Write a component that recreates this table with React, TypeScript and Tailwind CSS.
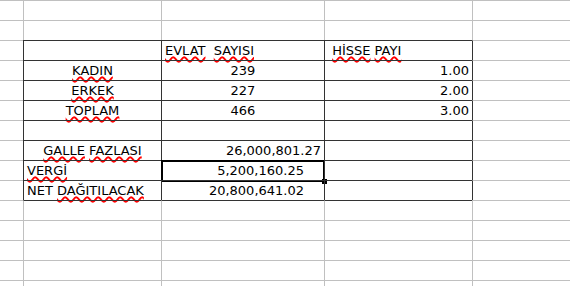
import type { ReactNode } from 'react';

// spell-check squiggle under a word
function W({ children }: { children: ReactNode }) {
  return (
    <span className="underline decoration-wavy decoration-[#ff0000] decoration-[1.5px] underline-offset-[1px]">
      {children}
    </span>
  );
}

type Align = 'left' | 'center' | 'right';

interface CellSpec {
  content?: ReactNode;
  align?: Align;
  pad?: string;
}

const ROWS = 15;
const COLS = 5;

const cells: Record<string, CellSpec> = {
  '2-2': { content: <><W>EVLAT</W>{'\u00a0\u00a0'}<W>SAYISI</W></> },
  '2-3': { content: <>{'\u00a0'}<W>HİSSE</W> <W>PAYI</W></> },
  '3-1': { content: <W>KADIN</W>, align: 'center' },
  '3-2': { content: '239', align: 'center' },
  '3-3': { content: '1.00', align: 'right' },
  '4-1': { content: <W>ERKEK</W>, align: 'center' },
  '4-2': { content: '227', align: 'center' },
  '4-3': { content: '2.00', align: 'right' },
  '5-1': { content: <W>TOPLAM</W>, align: 'center' },
  '5-2': { content: '466', align: 'center' },
  '5-3': { content: '3.00', align: 'right' },
  '7-1': { content: <><W>GALLE</W> <W>FAZLASI</W></>, align: 'center' },
  '7-2': { content: '26,000,801.27', align: 'right' },
  '8-1': { content: <W>VERGİ</W> },
  '8-2': { content: '5,200,160.25', align: 'right', pad: 'pr-[20px]' },
  '9-1': { content: <>NET <W>DAĞITILACAK</W></> },
  '9-2': { content: '20,800,641.02', align: 'right', pad: 'pr-[20px]' },
};

function inTable(r: number, c: number) {
  return r >= 2 && r <= 9 && c >= 1 && c <= 3;
}

function Cell({ r, c }: { r: number; c: number }) {
  const spec = cells[`${r}-${c}`] ?? {};
  const darkTop = inTable(r, c) || (r === 10 && c >= 1 && c <= 3);
  const darkLeft = inTable(r, c) || (c === 4 && r >= 2 && r <= 9);
  const justify =
    spec.align === 'center' ? 'justify-center' : spec.align === 'right' ? 'justify-end' : 'justify-start';

  return (
    <div
      className={`relative flex items-end whitespace-nowrap overflow-visible border-t ${
        darkTop ? 'border-t-[#333333]' : 'border-t-[#c0c0c0]'
      } ${c === 0 ? '' : 'border-l'} ${darkLeft ? 'border-l-[#333333]' : 'border-l-[#c0c0c0]'} ${justify} ${
        spec.pad ?? 'px-[3px]'
      } pb-[1px]`}
    >
      {spec.content && <span className="leading-[17px]">{spec.content}</span>}
      {r === 8 && c === 2 && (
        <div className="absolute left-[-1px] top-[-1px] w-[164px] h-[22px] border-2 border-black">
          <div className="absolute -right-1 -bottom-1 w-[5px] h-[5px] bg-black" />
        </div>
      )}
    </div>
  );
}

export default function App() {
  return (
    <div className="w-[570px] h-[286px] overflow-hidden bg-white text-black text-[13px] font-['DejaVu_Sans',sans-serif]">
      <div className="grid grid-cols-[23px_138px_163px_148px_148px] auto-rows-[20px] w-[620px]">
        {Array.from({ length: ROWS }).map((_, r) =>
          Array.from({ length: COLS }).map((_, c) => <Cell key={`${r}-${c}`} r={r} c={c} />)
        )}
      </div>
    </div>
  );
}
